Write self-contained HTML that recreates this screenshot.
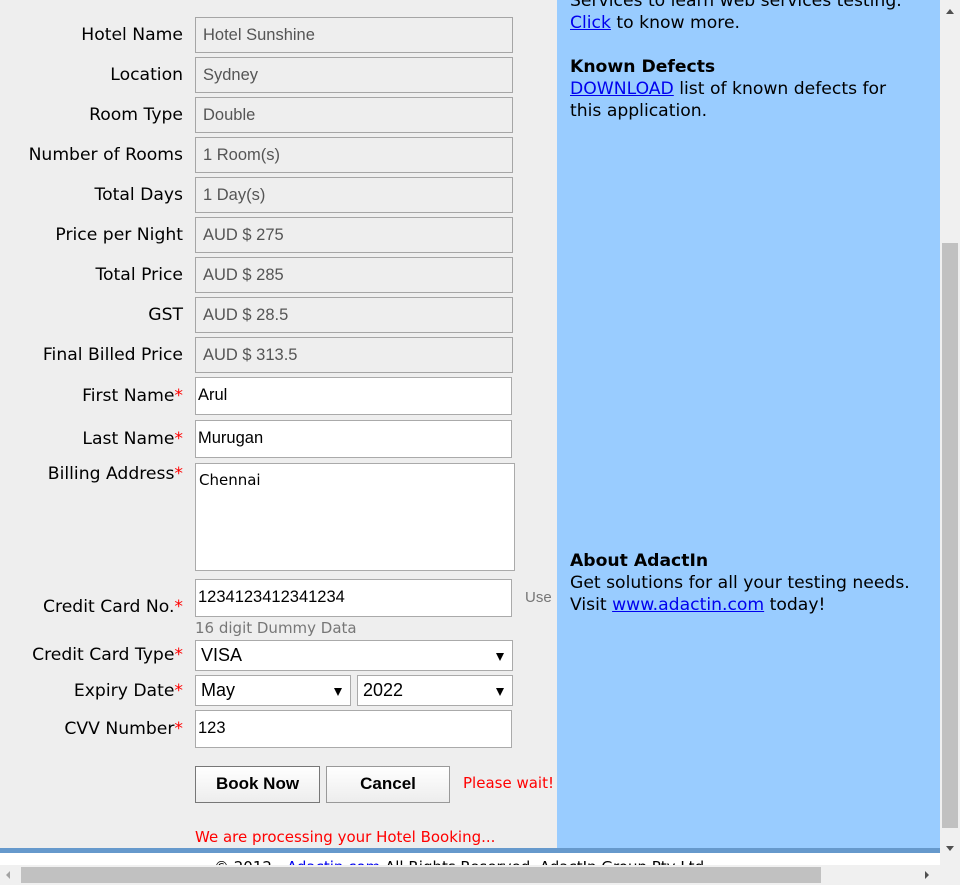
<!DOCTYPE html>
<html><head><meta charset="utf-8"><style>
*{box-sizing:border-box;margin:0;padding:0}
body{width:960px;height:885px;overflow:hidden;position:relative;background:#fff;font-family:"DejaVu Sans",Verdana,sans-serif}
.a{position:absolute}
#left{left:0;top:0;width:557px;height:848px;background:#eeeeee}
#right{left:557px;top:0;width:383px;height:848px;background:#99ccff;color:#000;font-size:17.2px;line-height:22px}
.lbl{position:absolute;right:777px;font-size:17.2px;color:#000;white-space:nowrap;text-align:right}
.st{color:#ff0000}
.ro{position:absolute;left:195px;width:318px;height:36px;border:1px solid #a5a5a5;background:#eeeeee;color:#555;font-family:"Liberation Sans",Arial,sans-serif;font-size:16.5px;padding:8px 7px}
.in{position:absolute;left:195px;width:317px;height:38px;border:1px solid #aaa;background:#fff;color:#000;font-family:"Liberation Sans",Arial,sans-serif;font-size:16.5px;padding:8px 2px}
.sel{position:absolute;height:31px;border:1px solid #aaa;background:#fff;font-family:"Liberation Sans",Arial,sans-serif;font-size:18px;padding:4px 5px}
.sel:after{content:"";position:absolute;right:8px;top:12px;border-left:4px solid transparent;border-right:4px solid transparent;border-top:8px solid #000}
.btn{position:absolute;top:766px;height:37px;border:1px solid #999;background:linear-gradient(#fff,#ededed);font-family:"Liberation Sans",Arial,sans-serif;font-weight:bold;font-size:17px;text-align:center;line-height:34px}
a{color:#0000ee;text-decoration:underline}
</style></head><body>
<div class="a" id="left"></div>
<div class="a" id="right">
<div class="a" style="left:13px;top:-10px;width:340px">Services to learn web services testing.<br><a>Click</a> to know more.<br><br><b>Known Defects</b><br><a>DOWNLOAD</a> list of known defects for this application.</div>
<div class="a" style="left:13px;top:550px;width:360px"><b>About AdactIn</b><br>Get solutions for all your testing needs. Visit <a>www.adactin.com</a> today!</div>
</div>

<div class="lbl" style="top:25px">Hotel Name</div><div class="ro" style="top:17px">Hotel Sunshine</div>
<div class="lbl" style="top:65px">Location</div><div class="ro" style="top:57px">Sydney</div>
<div class="lbl" style="top:105px">Room Type</div><div class="ro" style="top:97px">Double</div>
<div class="lbl" style="top:145px">Number of Rooms</div><div class="ro" style="top:137px">1 Room(s)</div>
<div class="lbl" style="top:185px">Total Days</div><div class="ro" style="top:177px">1 Day(s)</div>
<div class="lbl" style="top:225px">Price per Night</div><div class="ro" style="top:217px">AUD $ 275</div>
<div class="lbl" style="top:265px">Total Price</div><div class="ro" style="top:257px">AUD $ 285</div>
<div class="lbl" style="top:305px">GST</div><div class="ro" style="top:297px">AUD $ 28.5</div>
<div class="lbl" style="top:345px">Final Billed Price</div><div class="ro" style="top:337px">AUD $ 313.5</div>

<div class="lbl" style="top:386px">First Name<span class="st">*</span></div><div class="in" style="top:377px">Arul</div>
<div class="lbl" style="top:429px">Last Name<span class="st">*</span></div><div class="in" style="top:420px">Murugan</div>
<div class="lbl" style="top:464px">Billing Address<span class="st">*</span></div>
<div class="in" style="top:463px;width:320px;height:108px;font-family:'DejaVu Sans',sans-serif;font-size:15px;padding:7px 3px">Chennai</div>
<div class="lbl" style="top:597px">Credit Card No.<span class="st">*</span></div><div class="in" style="top:579px">1234123412341234</div>
<div class="a" style="left:525px;top:589px;font-family:'Liberation Sans',sans-serif;font-size:15px;color:#777">Use</div>
<div class="a" style="left:195px;top:619px;font-size:15px;color:#777">16 digit Dummy Data</div>
<div class="lbl" style="top:645px">Credit Card Type<span class="st">*</span></div><div class="sel" style="left:195px;top:640px;width:318px">VISA</div>
<div class="lbl" style="top:681px">Expiry Date<span class="st">*</span></div>
<div class="sel" style="left:195px;top:675px;width:156px">May</div>
<div class="sel" style="left:357px;top:675px;width:156px">2022</div>
<div class="lbl" style="top:719px">CVV Number<span class="st">*</span></div><div class="in" style="top:710px">123</div>

<div class="btn" style="left:195px;width:125px;border-color:#777">Book Now</div>
<div class="btn" style="left:326px;width:124px">Cancel</div>
<div class="a" style="left:463px;top:774px;font-size:15px;color:#ff0000">Please wait!</div>
<div class="a" style="left:195px;top:828px;font-size:15px;color:#ff0000">We are processing your Hotel Booking...</div>

<div class="a" style="left:0;top:848px;width:940px;height:5px;background:#6699cc"></div>
<div class="a" style="left:214px;top:858px;font-size:15px;color:#000;white-space:nowrap">© 2012 - <a style="text-decoration:none">Adactin.com</a> All Rights Reserved. AdactIn Group Pty Ltd</div>

<div class="a" style="left:940px;top:0;width:20px;height:865px;background:#f0f0f0"></div>
<div class="a" style="left:942px;top:243px;width:16px;height:585px;background:#c1c1c1"></div>
<div class="a" style="left:946px;top:9px;border-left:4px solid transparent;border-right:4px solid transparent;border-bottom:5px solid #505050"></div>
<div class="a" style="left:946px;top:846px;border-left:4px solid transparent;border-right:4px solid transparent;border-top:5px solid #505050"></div>
<div class="a" style="left:0;top:865px;width:960px;height:20px;background:#f0f0f0"></div>
<div class="a" style="left:21px;top:867px;width:800px;height:16px;background:#c1c1c1"></div>
<div class="a" style="left:6px;top:871px;border-top:4px solid transparent;border-bottom:4px solid transparent;border-right:4px solid #a3a3a3"></div>
<div class="a" style="left:925px;top:871px;border-top:4px solid transparent;border-bottom:4px solid transparent;border-left:4px solid #505050"></div>
</body></html>
